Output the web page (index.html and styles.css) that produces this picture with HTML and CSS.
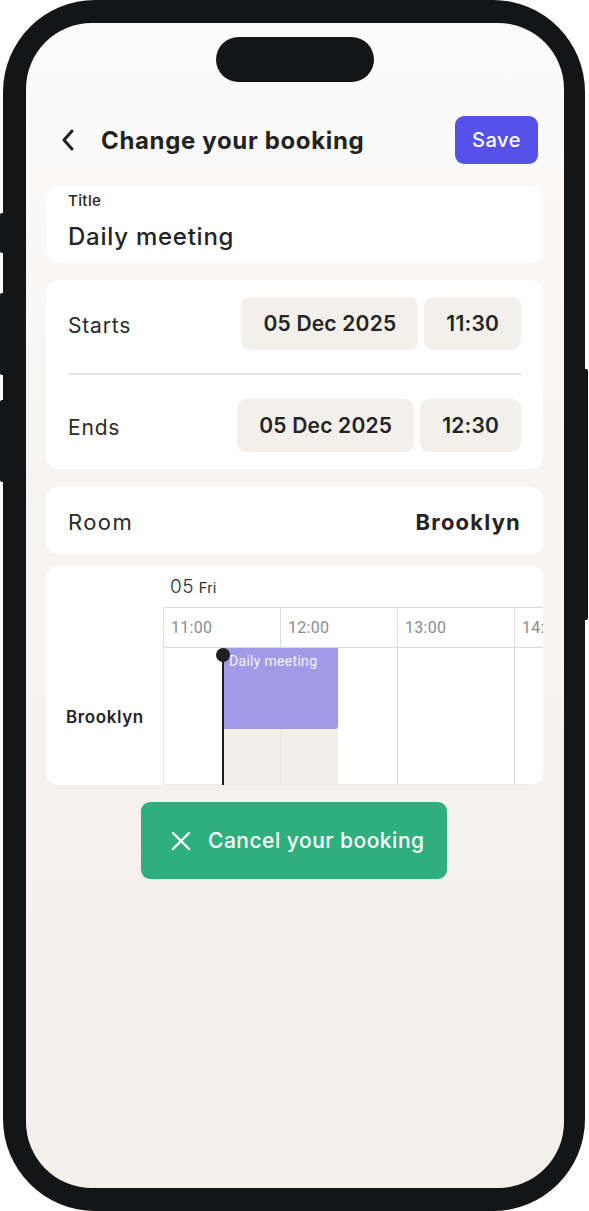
FILE: index.html
```html
<!DOCTYPE html>
<html>
	<head>
		<meta charset="UTF-8">
		<title>Change your booking</title>
		<link rel="stylesheet" href="styles.css">
	</head>
	<body>
		<div class="device">
			<span class="btn-side b1"></span>
			<span class="btn-side b2"></span>
			<span class="btn-side b3"></span>
			<span class="btn-side b4"></span>
			<div class="frame">
				<div class="screen">
					<div class="island"></div>

					<div class="header">
						<svg class="back" width="14" height="22" viewBox="0 0 14 22"><path d="M11 2 L3 11 L11 20" fill="none" stroke="#1f1f1f" stroke-width="3" stroke-linecap="round" stroke-linejoin="round"/></svg>
						<h1>Change your booking</h1>
						<button class="save">Save</button>
					</div>

					<div class="content">
						<div class="card title-card">
							<div class="label">Title</div>
							<div class="value">Daily meeting</div>
						</div>

						<div class="card time-card">
							<div class="row">
								<span class="row-label">Starts</span>
								<div class="pills">
									<span class="pill">05 Dec 2025</span>
									<span class="pill">11:30</span>
								</div>
							</div>
							<div class="divider"></div>
							<div class="row">
								<span class="row-label">Ends</span>
								<div class="pills">
									<span class="pill">05 Dec 2025</span>
									<span class="pill">12:30</span>
								</div>
							</div>
						</div>

						<div class="card room-card">
							<span class="row-label">Room</span>
							<span class="room-name">Brooklyn</span>
						</div>

						<div class="card timeline">
							<div class="day"><span class="day-num">05</span> <span class="day-name">Fri</span></div>
							<div class="grid">
								<div class="corner"></div>
								<div class="hours">
									<span class="hour">11:00</span>
									<span class="hour">12:00</span>
									<span class="hour">13:00</span>
									<span class="hour">14:00</span>
								</div>
								<div class="room-label">Brooklyn</div>
								<div class="lane">
									<span class="slot"></span>
									<span class="slot"></span>
									<span class="slot"></span>
									<span class="slot"></span>
									<div class="busy"></div>
									<div class="event">Daily meeting</div>
									<div class="now"></div>
								</div>
							</div>
						</div>

						<button class="cancel">
							<svg width="20" height="20" viewBox="0 0 20 20"><path d="M2 2 L18 18 M18 2 L2 18" stroke="#fff" stroke-width="2.4" stroke-linecap="round"/></svg>
							Cancel your booking
						</button>
					</div>
				</div>
			</div>
		</div>
	</body>
</html>
```

FILE: styles.css
```css
*{
	margin:0;
	padding:0;
	box-sizing:border-box;
}
body{
	background:#fff;
	font-family:"Inter","Noto Sans",sans-serif;
	color:#242424;
}
.device{
	position:relative;
	width:589px;
	height:1211px;
}
.btn-side{
	position:absolute;
	width:6px;
	background:#141517;
	border-radius:2px;
}
.b1{ left:0; top:213px; height:40px; }
.b2{ left:0; top:293px; height:82px; }
.b3{ left:0; top:400px; height:82px; }
.b4{ right:1px; top:369px; height:251px; }
.frame{
	position:relative;
	margin-left:3px;
	width:582px;
	height:1211px;
	padding:23px 21px 23px 23px;
	background:#141517;
	border-radius:92px;
}
.screen{
	height:100%;
	border-radius:66px;
	overflow:hidden;
	background:linear-gradient(#fcfbfb 0, #faf9f8 170px, #f6f4f1 500px, #f4f1ec 900px);
	display:flex;
	flex-direction:column;
}
.island{
	width:158px;
	height:45px;
	margin:14px auto 0;
	background:#141517;
	border-radius:23px;
}

/* header */
.header{
	display:flex;
	align-items:center;
	height:48px;
	margin-top:34px;
	padding:0 26px 0 35px;
}
.back{
	flex:none;
}
.header h1{
	flex:1;
	margin-left:26px;
	font-size:24px;
	font-weight:700;
	letter-spacing:0.65px;
	color:#222;
}
.save{
	width:83px;
	height:48px;
	border:none;
	border-radius:9px;
	background:#5652e9;
	color:#fff;
	font-family:inherit;
	font-size:20px;
	font-weight:500;
	letter-spacing:0.5px;
}

/* cards */
.content{
	display:flex;
	flex-direction:column;
	gap:17px;
	margin-top:22px;
	padding:0 21px 0 20px;
}
.card{
	background:#fff;
	border-radius:12px;
}
.title-card{
	height:77px;
	padding:6px 22px 0;
}
.title-card .label{
	font-size:15px;
	font-weight:500;
	line-height:17px;
	letter-spacing:0.4px;
}
.title-card .value{
	margin-top:13px;
	font-size:24px;
	font-weight:500;
	line-height:30px;
	letter-spacing:0.75px;
}
.time-card{
	padding:17px 22px;
	margin-bottom:1px;
}
.row{
	display:flex;
	align-items:center;
	justify-content:space-between;
}
.row-label{
	padding-top:3px;
	font-size:21px;
	font-weight:400;
	letter-spacing:0.8px;
	color:#2a2a2a;
}
.pills{
	display:flex;
	gap:6px;
}
.pill{
	height:53px;
	padding:0 22px;
	border-radius:9px;
	background:#f3f0eb;
	font-size:21px;
	font-weight:600;
	line-height:53px;
	letter-spacing:0.2px;
}
.divider{
	height:2px;
	margin:23px 0 24px;
	background:#e6e6e4;
}
.room-card{
	height:67px;
	padding:0 22px;
	display:flex;
	align-items:center;
	justify-content:space-between;
}
.room-card .row-label{
	font-size:22px;
	letter-spacing:1.4px;
}
.room-name{
	padding-top:2px;
	font-size:22px;
	font-weight:700;
	letter-spacing:1.2px;
}

/* timeline */
.timeline{
	height:219px;
	margin-top:-5px;
	overflow:hidden;
}
.day{
	height:41px;
	padding:9px 0 0 124px;
	color:#333;
}
.day-num{
	font-size:19px;
	font-weight:300;
	letter-spacing:0.6px;
}
.day-name{
	font-family:Roboto,sans-serif;
	font-size:15px;
	letter-spacing:0.4px;
}
.grid{
	display:grid;
	grid-template-columns:117px 468px;
	grid-template-rows:41px 137px;
}
.hours{
	display:flex;
	border-top:1px solid #dcdbe0;
	border-bottom:1px solid #dcdbe0;
	border-left:1px solid #dcdbe0;
}
.hour{
	width:117px;
	flex:none;
	padding:10px 0 0 7px;
	border-right:1px solid #dcdbe0;
	font-family:Roboto,sans-serif;
	font-size:16px;
	letter-spacing:0.3px;
	color:#8d8d8d;
}
.room-label{
	display:flex;
	align-items:center;
	padding:0 0 0 20px;
	font-size:17px;
	font-weight:600;
	letter-spacing:0.6px;
}
.lane{
	position:relative;
	display:flex;
	border-left:1px solid #ececee;
	border-bottom:1px solid #ececee;
}
.slot{
	width:117px;
	flex:none;
	border-right:1px solid #d4d3da;
}
.busy{
	position:absolute;
	left:58px;
	top:0;
	width:116px;
	height:137px;
	background:rgba(240,236,229,0.85);
}
.event{
	position:absolute;
	left:58px;
	top:0;
	width:116px;
	height:81px;
	padding:5px 0 0 7px;
	border-radius:0 0 3px 3px;
	background:rgba(140,134,230,0.8);
	font-family:Roboto,sans-serif;
	font-size:14px;
	letter-spacing:0.3px;
	color:#f3f2ff;
}
.now{
	position:absolute;
	left:58px;
	top:7px;
	width:2px;
	height:130px;
	background:#1e1e1e;
}
.now::before{
	content:"";
	position:absolute;
	left:-6px;
	top:-7px;
	width:14px;
	height:14px;
	border-radius:50%;
	background:#1e1e1e;
}

.cancel{
	align-self:center;
	display:flex;
	align-items:center;
	gap:17px;
	width:306px;
	height:77px;
	margin-left:-1px;
	padding-left:30px;
	border:none;
	border-radius:9px;
	background:#2eaf7d;
	color:#fff;
	font-family:inherit;
	font-size:21px;
	font-weight:500;
	letter-spacing:0.5px;
}
```
